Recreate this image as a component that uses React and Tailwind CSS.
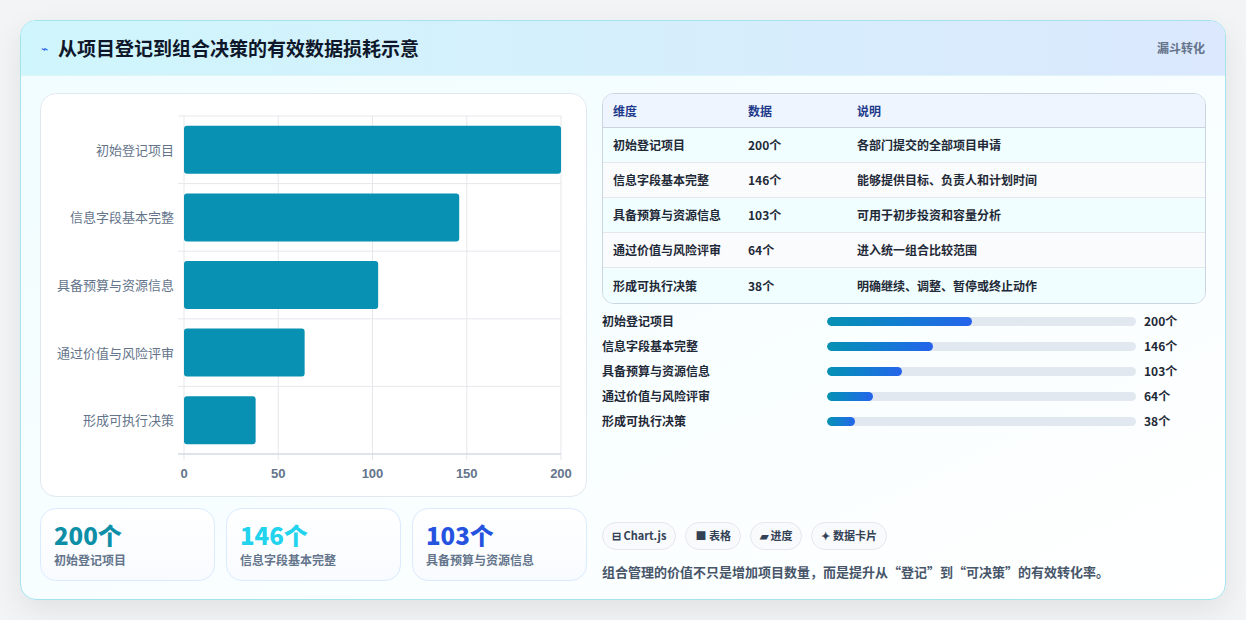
const ROWS = [
  { name: '初始登记项目', v: 200, note: '各部门提交的全部项目申请' },
  { name: '信息字段基本完整', v: 146, note: '能够提供目标、负责人和计划时间' },
  { name: '具备预算与资源信息', v: 103, note: '可用于初步投资和容量分析' },
  { name: '通过价值与风险评审', v: 64, note: '进入统一组合比较范围' },
  { name: '形成可执行决策', v: 38, note: '明确继续、调整、暂停或终止动作' },
]

const FONT = { fontFamily: '"Noto Sans CJK SC", "Noto Sans", sans-serif' }

function Chart() {
  const x0 = 143, x1 = 520, y0 = 22, y1 = 360
  const rh = (y1 - y0) / 5
  const sx = v => x0 + ((x1 - x0) * v) / 200
  return (
    <svg width="546" height="403" className="block">
      {[0, 50, 100, 150, 200].map(t => (
        <g key={t}>
          <line x1={sx(t)} x2={sx(t)} y1={y0} y2={y1 + 6} stroke="#e5e7eb" />
          <text x={sx(t)} y={384} textAnchor="middle" fontSize="13" fill="#64748b" fontFamily="Liberation Sans, sans-serif" fontWeight="600">{t}</text>
        </g>
      ))}
      {[0, 1, 2, 3, 4, 5].map(i => (
        <line key={i} x1={x0 - 6} x2={x1} y1={y0 + i * rh} y2={y0 + i * rh} stroke="#e5e7eb" />
      ))}
      <line x1={x0 - 6} x2={x1} y1={y1} y2={y1} stroke="#cbd5e1" />
      {ROWS.map((r, i) => {
        const cy = y0 + rh * i + rh / 2
        return (
          <g key={r.name}>
            <rect x={x0} y={cy - 24} width={sx(r.v) - x0} height={48} rx="3" fill="#0891b2" />
            <text x={x0 - 10} y={cy + 5} textAnchor="end" fontSize="13" fill="#64748b" style={FONT}>{r.name}</text>
          </g>
        )
      })}
    </svg>
  )
}

export default function App() {
  return (
    <div className="w-[1246px] h-[620px] bg-[#f3f4f6] p-[20px] pb-[20px]" style={FONT}>
      <div className="h-[580px] rounded-2xl border border-[#a5e4ef] bg-gradient-to-br from-[#f0fdff] to-white shadow-[0_10px_30px_rgba(0,0,0,0.08)] overflow-hidden flex flex-col">
        {/* Header */}
        <div className="h-[55px] shrink-0 flex items-center justify-between px-5 bg-gradient-to-r from-[#cff6fc] to-[#dbe8fd] border-b border-[#dff4f8]">
          <div className="flex items-center gap-2.5">
            <span className="text-[#2563eb] text-xs">⌁</span>
            <h1 className="text-[19px] font-bold text-[#0f172a]">从项目登记到组合决策的有效数据损耗示意</h1>
          </div>
          <span className="text-xs font-bold text-[#64748b]">漏斗转化</span>
        </div>

        <div className="flex-1 flex gap-[15px] px-[19px] pt-[17px]">
          {/* Left column */}
          <div className="w-[547px] shrink-0 flex flex-col gap-[11px]">
            <div className="h-[404px] rounded-2xl border border-[#e2e8f0] bg-white overflow-hidden">
              <Chart />
            </div>
            <div className="grid grid-cols-3 gap-[11px]">
              {[
                ['200个', '初始登记项目', 'text-[#0e8fa8]'],
                ['146个', '信息字段基本完整', 'text-[#22d3ee]'],
                ['103个', '具备预算与资源信息', 'text-[#2453e0]'],
              ].map(([n, l, c]) => (
                <div key={l} className="h-[73px] rounded-2xl border border-[#dbeafe] bg-gradient-to-b from-white to-[#f8fbff] px-[13px] pt-[11px]">
                  <div className={`text-[24px] leading-[30px] font-extrabold ${c}`}>{n}</div>
                  <div className="text-xs font-semibold text-[#64748b] mt-[2px]">{l}</div>
                </div>
              ))}
            </div>
          </div>

          {/* Right column */}
          <div className="flex-1 flex flex-col">
            <div className="rounded-xl border border-[#cbd5e1] overflow-hidden bg-white">
              <div className="h-[34px] flex items-center text-xs font-bold text-[#1e3a8a] bg-[#eef5ff] border-b border-[#cbd5e1]">
                <span className="w-[145px] pl-[10px]">维度</span>
                <span className="w-[109px]">数据</span>
                <span>说明</span>
              </div>
              {ROWS.map((r, i) => (
                <div key={r.name} className={`h-[35px] flex items-center text-xs font-semibold text-[#1f2937] ${i < 4 ? 'border-b border-[#e5e7eb]' : ''} ${i % 2 ? 'bg-[#fafbfc]' : 'bg-[#f0feff]'}`}>
                  <span className="w-[145px] pl-[10px]">{r.name}</span>
                  <span className="w-[109px]">{r.v}个</span>
                  <span>{r.note}</span>
                </div>
              ))}
            </div>

            <div className="mt-[10px] flex flex-col gap-[11px]">
              {ROWS.map(r => (
                <div key={r.name} className="h-[14px] flex items-center text-xs font-semibold text-[#1f2937]">
                  <span className="w-[225px]">{r.name}</span>
                  <div className="w-[309px] h-[9px] rounded-full bg-[#e2e8f0] overflow-hidden">
                    <div className="h-full rounded-full bg-gradient-to-r from-[#0891b2] to-[#2563eb]" style={{ width: `${(r.v / 200) * 47}%` }} />
                  </div>
                  <span className="ml-[8px] font-bold">{r.v}个</span>
                </div>
              ))}
            </div>

            <div className="mt-auto pb-[18px]">
              <div className="flex gap-[9px] mb-[12px]">
                {['⊟ Chart.js', '■ 表格', '▰ 进度', '✦ 数据卡片'].map(t => (
                  <span key={t} className="h-[28px] px-[9px] flex items-center rounded-full border border-[#e5e7eb] bg-[#f8fafc] text-[11px] font-bold text-[#334155]">{t}</span>
                ))}
              </div>
              <p className="text-[13px] font-semibold text-[#475569]">组合管理的价值不只是增加项目数量，而是提升从“登记”到“可决策”的有效转化率。</p>
            </div>
          </div>
        </div>
      </div>
    </div>
  )
}
